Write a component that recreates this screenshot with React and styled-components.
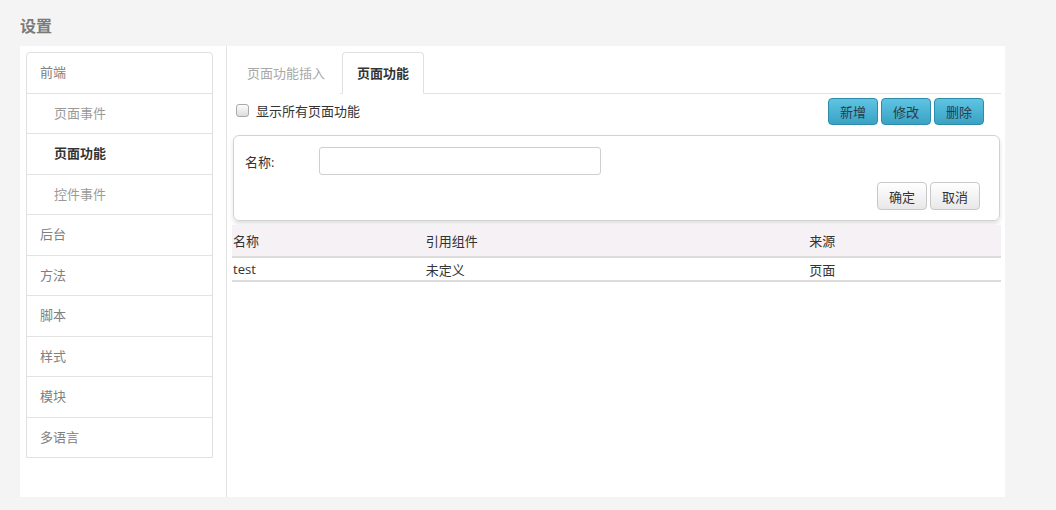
import React, { useState } from "react";
import styled, { createGlobalStyle } from "styled-components";

const GlobalStyle = createGlobalStyle`
  html, body {
    margin: 0;
    padding: 0;
    background: #f4f4f4;
    font-family: "Open Sans", "Noto Sans CJK SC", sans-serif;
    font-size: 13px;
    color: #333;
  }
`;

const navItems = [
  { label: "前端", level: 0 },
  { label: "页面事件", level: 1 },
  { label: "页面功能", level: 1, active: true },
  { label: "控件事件", level: 1 },
  { label: "后台", level: 0 },
  { label: "方法", level: 0 },
  { label: "脚本", level: 0 },
  { label: "样式", level: 0 },
  { label: "模块", level: 0 },
  { label: "多语言", level: 0 },
];

const rows = [{ name: "test", component: "未定义", source: "页面" }];

const App = () => {
  const [tab, setTab] = useState(1);
  const [showAll, setShowAll] = useState(false);

  return (
    <>
      <GlobalStyle />
      <Page>
        <Title>设置</Title>
        <Panel>
          <Sidebar>
            <Nav>
              {navItems.map((item) => (
                <NavItem key={item.label} $level={item.level} $active={item.active}>
                  {item.label}
                </NavItem>
              ))}
            </Nav>
          </Sidebar>

          <Content>
            <Tabs>
              {["页面功能插入", "页面功能"].map((t, i) => (
                <Tab key={t} $active={tab === i} onClick={() => setTab(i)}>
                  {t}
                </Tab>
              ))}
            </Tabs>

            <Toolbar>
              <CheckLabel>
                <Check
                  type="checkbox"
                  checked={showAll}
                  onChange={(e) => setShowAll(e.target.checked)}
                />
                显示所有页面功能
              </CheckLabel>
              <ButtonGroup>
                <InfoButton>新增</InfoButton>
                <InfoButton>修改</InfoButton>
                <InfoButton>删除</InfoButton>
              </ButtonGroup>
            </Toolbar>

            <FormPanel>
              <FieldRow>
                <FieldLabel>名称:</FieldLabel>
                <TextInput />
              </FieldRow>
              <FormActions>
                <PlainButton>确定</PlainButton>
                <PlainButton>取消</PlainButton>
              </FormActions>
            </FormPanel>

            <Table>
              <thead>
                <tr>
                  <Th style={{ width: "25%" }}>名称</Th>
                  <Th style={{ width: "50%" }}>引用组件</Th>
                  <Th style={{ width: "25%" }}>来源</Th>
                </tr>
              </thead>
              <tbody>
                {rows.map((r) => (
                  <tr key={r.name}>
                    <Td>{r.name}</Td>
                    <Td>{r.component}</Td>
                    <Td>{r.source}</Td>
                  </tr>
                ))}
              </tbody>
            </Table>
          </Content>
        </Panel>
      </Page>
    </>
  );
};

const Page = styled.div`
  padding: 15px 51px 13px 20px;
`;

const Title = styled.h1`
  margin: 0 0 9px;
  height: 22px;
  line-height: 22px;
  font-size: 16px;
  font-weight: bold;
  color: #7a7a7a;
`;

const Panel = styled.div`
  display: flex;
  height: 451px;
  background: #fff;
`;

const Sidebar = styled.div`
  width: 200px;
  padding: 6px 0 0 6px;
  border-right: 1px solid #e2e2e2;
`;

const Nav = styled.div`
  width: 185px;
  border: 1px solid #e0e0e0;
  border-radius: 4px 4px 0 0;
`;

const NavItem = styled.div`
  height: 39.5px;
  line-height: 39.5px;
  padding-left: ${(p) => (p.$level ? 27 : 13)}px;
  border-top: 1px solid #e3e3e3;
  color: ${(p) => (p.$active ? "#333" : p.$level ? "#9a9a9a" : "#808080")};
  font-weight: ${(p) => (p.$active ? "bold" : "normal")};

  &:first-child {
    border-top: none;
  }
`;

const Content = styled.div`
  flex: 1;
  padding: 6px 4px 0 5px;
  display: flex;
  flex-direction: column;
`;

const Tabs = styled.div`
  display: flex;
  border-bottom: 1px solid #e3e3e3;
`;

const Tab = styled.div`
  height: 40px;
  line-height: 40px;
  padding: 0 14px;
  margin-right: 2px;
  margin-bottom: -1px;
  border: 1px solid ${(p) => (p.$active ? "#e0e0e0" : "transparent")};
  border-bottom-color: ${(p) => (p.$active ? "#fff" : "transparent")};
  border-radius: 4px 4px 0 0;
  background: #fff;
  color: ${(p) => (p.$active ? "#333" : "#a8a8a8")};
  font-weight: ${(p) => (p.$active ? "bold" : "normal")};
  cursor: pointer;
`;

const Toolbar = styled.div`
  display: flex;
  justify-content: space-between;
  align-items: flex-start;
  height: 41px;
  padding-left: 4px;
  padding-right: 17px;
`;

const CheckLabel = styled.label`
  display: flex;
  align-items: center;
  gap: 7px;
  margin-top: 7px;
  color: #333;
`;

const Check = styled.input`
  appearance: none;
  width: 13px;
  height: 13px;
  margin: 0;
  border: 1px solid #a9a9a9;
  border-radius: 3px;
  background: linear-gradient(#fdfdfd, #dcdcdc);
  box-sizing: border-box;

  &:checked {
    background: linear-gradient(#6cc7e4, #3aa2c4);
    border-color: #2d8cab;
  }
`;

const ButtonGroup = styled.div`
  display: flex;
  gap: 3px;
  margin-top: 4px;
`;

const InfoButton = styled.button`
  width: 50px;
  height: 27px;
  padding: 0;
  border: 1px solid #2d8cab;
  border-radius: 4px;
  background: linear-gradient(#5ec4e2, #3aa2c4);
  color: #2a3b44;
  font: inherit;
  cursor: pointer;
`;

const FormPanel = styled.div`
  margin-left: 1px;
  margin-right: 1px;
  padding: 11px 19px 10px 11px;
  border: 1px solid #d2d2d2;
  border-radius: 6px;
  box-shadow: 0 3px 4px rgba(0, 0, 0, 0.12);
`;

const FieldRow = styled.div`
  display: flex;
  align-items: center;
`;

const FieldLabel = styled.span`
  width: 74px;
  color: #333;
`;

const TextInput = styled.input`
  height: 26px;
  padding: 0 6px;
  border: 1px solid #cfcfcf;
  border-radius: 3px;
  box-sizing: content-box;
  width: 268px;
  outline: none;
`;

const FormActions = styled.div`
  display: flex;
  justify-content: flex-end;
  gap: 3px;
  margin-top: 7px;
`;

const PlainButton = styled.button`
  width: 50px;
  height: 28px;
  padding: 0;
  border: 1px solid #c8c8c8;
  border-radius: 4px;
  background: linear-gradient(#ffffff, #e8e8e8);
  color: #333;
  font: inherit;
  cursor: pointer;
`;

const Table = styled.table`
  width: 100%;
  margin-top: 4px;
  border-collapse: collapse;
  table-layout: fixed;
`;

const Th = styled.th`
  height: 31px;
  padding: 0 1px;
  text-align: left;
  font-weight: normal;
  color: #333;
  background: #f6f1f4;
  border-bottom: 2px solid #dcdcdc;
`;

const Td = styled.td`
  height: 22px;
  padding: 0 1px;
  color: #333;
  border-bottom: 2px solid #dcdcdc;
`;

export default App;
